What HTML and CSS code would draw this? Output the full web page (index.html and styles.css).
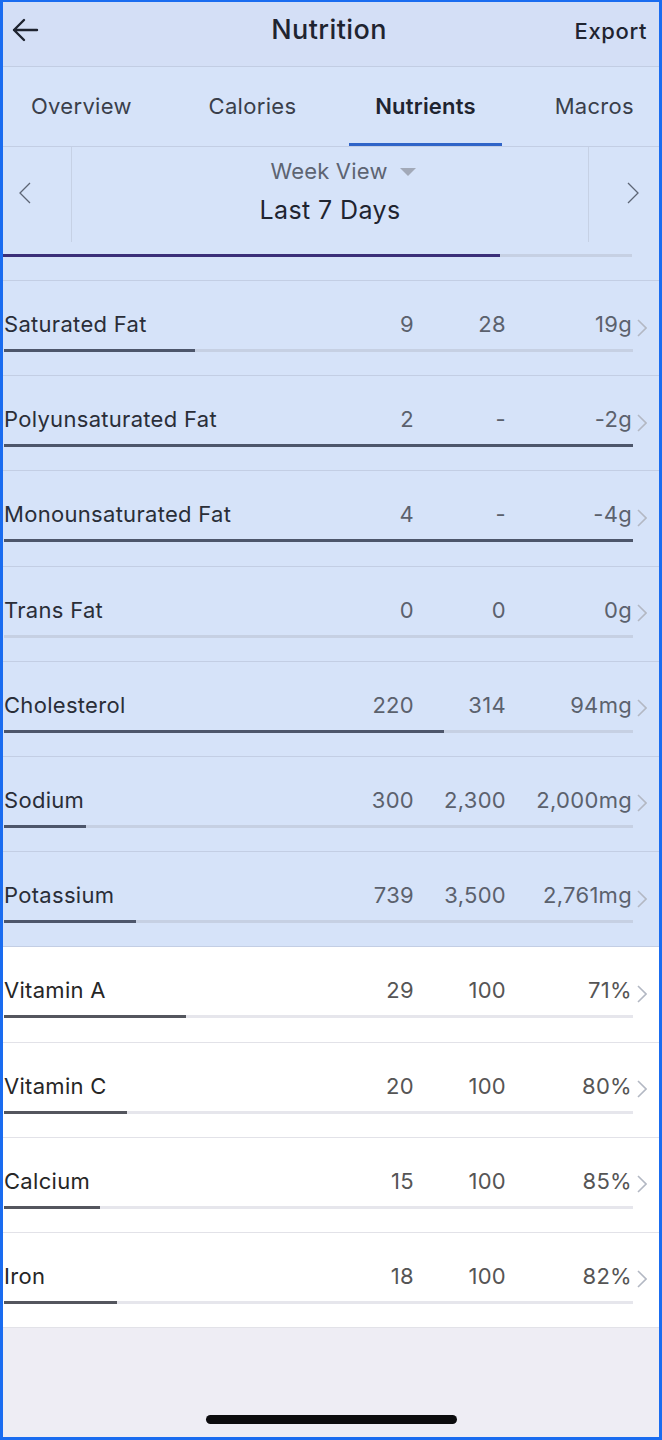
FILE: index.html
```html
<!DOCTYPE html>
<html lang="en">
<head>
<meta charset="utf-8">
<title>Nutrition</title>
<link rel="stylesheet" href="styles.css">
</head>
<body>
<div class="frame">
  <header class="topbar">
    <button class="back" aria-label="Back">
      <svg width="28" height="24" viewBox="0 0 28 24"><path d="M26 12H3M13 2L3 12l10 10" fill="none" stroke="#1f2430" stroke-width="2.4" stroke-linecap="round" stroke-linejoin="round"/></svg>
    </button>
    <h1 class="title">Nutrition</h1>
    <span class="export">Export</span>
  </header>

  <nav class="tabs">
    <span class="tab">Overview</span>
    <span class="tab">Calories</span>
    <span class="tab active">Nutrients</span>
    <span class="tab">Macros</span>
  </nav>

  <section class="range">
    <div class="arrow-cell left">
      <svg width="12" height="22" viewBox="0 0 12 22"><path d="M11 1L1 11l10 10" fill="none" stroke="#5d6575" stroke-width="1.3"/></svg>
    </div>
    <div class="range-center">
      <div class="week">Week View <span class="caret"></span></div>
      <div class="days">Last 7 Days</div>
    </div>
    <div class="arrow-cell right">
      <svg width="12" height="22" viewBox="0 0 12 22"><path d="M1 1l10 10L1 21" fill="none" stroke="#5d6575" stroke-width="1.3"/></svg>
    </div>
  </section>

  <div class="overall">
    <div class="track purple"><div class="fill" style="width:79%"></div></div>
  </div>

  <ul class="list">
    <li class="row hl"><span class="name">Saturated Fat</span><span class="n">9</span><span class="n">28</span><span class="n">19g</span><svg class="chev" viewBox="0 0 10 18"><path d="M1 1l8 8-8 8"/></svg><div class="track"><div class="fill" style="width:30.4%"></div></div></li>
    <li class="row hl"><span class="name">Polyunsaturated Fat</span><span class="n">2</span><span class="n">-</span><span class="n">-2g</span><svg class="chev" viewBox="0 0 10 18"><path d="M1 1l8 8-8 8"/></svg><div class="track"><div class="fill" style="width:100%"></div></div></li>
    <li class="row hl"><span class="name">Monounsaturated Fat</span><span class="n">4</span><span class="n">-</span><span class="n">-4g</span><svg class="chev" viewBox="0 0 10 18"><path d="M1 1l8 8-8 8"/></svg><div class="track"><div class="fill" style="width:100%"></div></div></li>
    <li class="row hl"><span class="name">Trans Fat</span><span class="n">0</span><span class="n">0</span><span class="n">0g</span><svg class="chev" viewBox="0 0 10 18"><path d="M1 1l8 8-8 8"/></svg><div class="track"><div class="fill" style="width:0%"></div></div></li>
    <li class="row hl"><span class="name">Cholesterol</span><span class="n">220</span><span class="n">314</span><span class="n">94mg</span><svg class="chev" viewBox="0 0 10 18"><path d="M1 1l8 8-8 8"/></svg><div class="track"><div class="fill" style="width:70%"></div></div></li>
    <li class="row hl"><span class="name">Sodium</span><span class="n">300</span><span class="n">2,300</span><span class="n">2,000mg</span><svg class="chev" viewBox="0 0 10 18"><path d="M1 1l8 8-8 8"/></svg><div class="track"><div class="fill" style="width:13%"></div></div></li>
    <li class="row hl"><span class="name">Potassium</span><span class="n">739</span><span class="n">3,500</span><span class="n">2,761mg</span><svg class="chev" viewBox="0 0 10 18"><path d="M1 1l8 8-8 8"/></svg><div class="track"><div class="fill" style="width:21%"></div></div></li>
    <li class="row"><span class="name">Vitamin A</span><span class="n">29</span><span class="n">100</span><span class="n">71%</span><svg class="chev" viewBox="0 0 10 18"><path d="M1 1l8 8-8 8"/></svg><div class="track"><div class="fill" style="width:29%"></div></div></li>
    <li class="row"><span class="name">Vitamin C</span><span class="n">20</span><span class="n">100</span><span class="n">80%</span><svg class="chev" viewBox="0 0 10 18"><path d="M1 1l8 8-8 8"/></svg><div class="track"><div class="fill" style="width:19.5%"></div></div></li>
    <li class="row"><span class="name">Calcium</span><span class="n">15</span><span class="n">100</span><span class="n">85%</span><svg class="chev" viewBox="0 0 10 18"><path d="M1 1l8 8-8 8"/></svg><div class="track"><div class="fill" style="width:15.3%"></div></div></li>
    <li class="row"><span class="name">Iron</span><span class="n">18</span><span class="n">100</span><span class="n">82%</span><svg class="chev" viewBox="0 0 10 18"><path d="M1 1l8 8-8 8"/></svg><div class="track"><div class="fill" style="width:18%"></div></div></li>
  </ul>

  <footer class="bottom">
    <div class="home"></div>
  </footer>
</div>
</body>
</html>
```

FILE: styles.css
```css
* { box-sizing: border-box; }
html, body { margin: 0; padding: 0; }
body {
  width: 662px;
  height: 1440px;
  font-family: Inter, Roboto, "Liberation Sans", sans-serif;
  background: #eeedf4;
}
.frame {
  width: 662px;
  height: 1440px;
  border: 3px solid #1a6cf0;
  border-top-width: 2px;
  display: flex;
  flex-direction: column;
  background: #eeedf4;
  overflow: hidden;
}
.topbar {
  height: 65px;
  flex: none;
  background: #d4dff6;
  border-bottom: 1px solid #c2cde3;
  display: grid;
  grid-template-columns: 1fr auto 1fr;
  align-items: center;
  padding: 0 12px 10px 8px;
}
.back {
  background: none;
  border: 0;
  padding: 0;
  display: flex;
  align-items: center;
  justify-self: start;
  margin-top: 2px;
}
.title {
  margin: 0;
  font-size: 27px;
  font-weight: 500;
  color: #1f2430;
  letter-spacing: 0.4px;
}
.export {
  justify-self: end;
  font-size: 22px;
  font-weight: 500;
  color: #1f2430;
  margin-top: 4px;
  letter-spacing: 0.6px;
}
.tabs {
  height: 80px;
  flex: none;
  background: #d6e3f9;
  border-bottom: 1px solid #c3cee4;
  display: flex;
  justify-content: space-between;
  padding: 0 1px 0 4px;
}
.tab {
  padding: 0 24px;
  display: flex;
  align-items: center;
  font-size: 22px;
  color: #3a3f4b;
  border-bottom: 3px solid transparent;
  padding-top: 1px;
  letter-spacing: 0.3px;
}
.tab.active {
  color: #1f2430;
  font-weight: 600;
  border-bottom-color: #2f64c8;
  letter-spacing: 0.2px;
  padding: 1px 26px 0;
}
.range {
  height: 95px;
  flex: none;
  background: #d6e3f9;
  display: grid;
  grid-template-columns: 69px 1fr 71px;
}
.arrow-cell {
  display: flex;
  align-items: center;
}
.arrow-cell.left {
  border-right: 1px solid #c6d1e5;
  padding-left: 16px;
  padding-bottom: 4px;
}
.arrow-cell.right {
  border-left: 1px solid #c6d1e5;
  padding-left: 38px;
  padding-bottom: 4px;
}
.range-center {
  display: flex;
  flex-direction: column;
  align-items: center;
  padding-top: 10px;
}
.week {
  font-size: 22px;
  color: #5d6472;
  line-height: 28px;
  display: flex;
  align-items: center;
  gap: 12px;
  padding-left: 26px;
  letter-spacing: 0.2px;
}
.caret {
  width: 0;
  height: 0;
  border-left: 8px solid transparent;
  border-right: 8px solid transparent;
  border-top: 8px solid #a2a9b8;
  margin-top: 2px;
}
.days {
  font-size: 25px;
  color: #1f2430;
  line-height: 32px;
  margin-top: 9px;
  letter-spacing: 0.4px;
}
.overall {
  height: 39px;
  flex: none;
  background: #d6e3f9;
  border-bottom: 1px solid #c3cee4;
  padding: 12px 27px 0 0;
}
.track {
  height: 3px;
  background: #c6d0e3;
}
.track .fill {
  height: 100%;
  background: #4d566b;
}
.track.purple .fill {
  background: #3b2f79;
}
.list {
  list-style: none;
  margin: 0;
  padding: 0;
  flex: none;
}
.row {
  height: 95.2px;
  display: grid;
  grid-template-columns: 1fr 80px 92px 126px 27px;
  grid-template-rows: 26px 3px;
  row-gap: 12px;
  align-content: start;
  padding: 30px 0 0 1px;
  background: #fff;
  border-bottom: 1px solid #e2e2e8;
  font-size: 22px;
  letter-spacing: 0.3px;
}
.row.hl {
  background: #d6e3f9;
  border-bottom-color: #c3cee4;
}
.name {
  color: #2a2e38;
  line-height: 26px;
  white-space: nowrap;
}
.n {
  text-align: right;
  color: #5b616d;
  line-height: 26px;
  white-space: nowrap;
}
.row:not(.hl) .n { color: #555; }
.row:not(.hl) .name { color: #262626; }
.chev {
  align-self: center;
  justify-self: start;
  margin: 7px 0 0 5px;
  width: 10px;
  height: 18px;
  fill: none;
  stroke: #b3b8c3;
  stroke-width: 1.6;
}
.row .track {
  grid-column: 1 / 5;
  grid-row: 2;
  margin-right: -1px;
}
.row:not(.hl) .track { background: #e6e6ec; }
.row:not(.hl) .track .fill { background: #54565e; }
.bottom {
  flex: 1;
  background: #eeedf4;
  display: flex;
  justify-content: center;
  align-items: flex-end;
  padding-bottom: 13px;
}
.home {
  width: 251px;
  height: 9px;
  border-radius: 5px;
  background: #0b0b0d;
}
```
